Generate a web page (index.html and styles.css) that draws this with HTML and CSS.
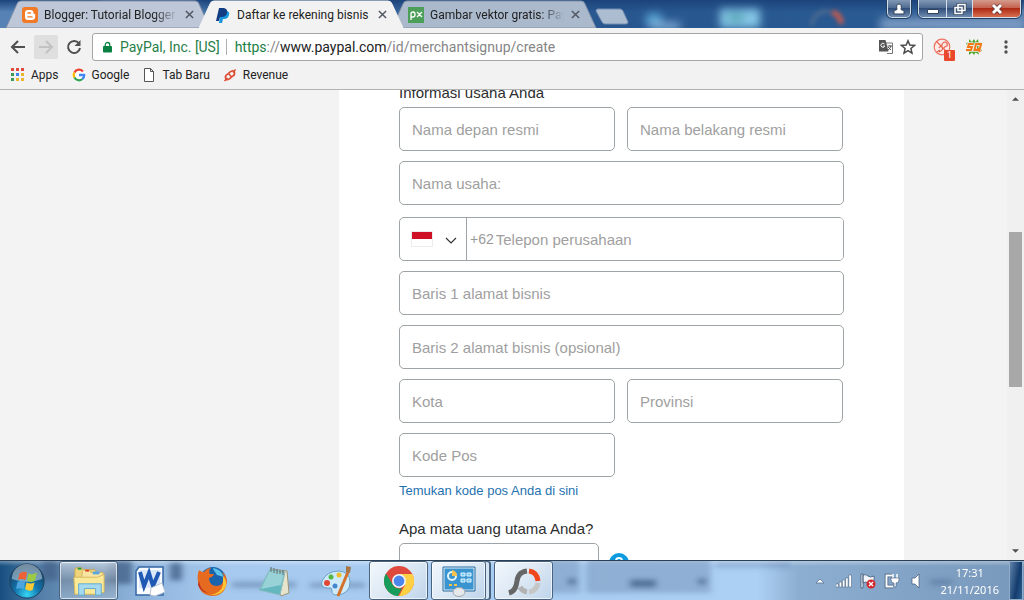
FILE: index.html
```html
<!DOCTYPE html>
<html lang="id">
<head>
<meta charset="utf-8">
<meta name="viewport" content="width=device-width, initial-scale=1">
<title>Daftar ke rekening bisnis</title>
<link rel="stylesheet" href="styles.css">
</head>
<body>
<header class="titlebar">
  <svg class="glass" viewBox="0 0 1024 28" preserveAspectRatio="none" aria-hidden="true">
    <defs><filter id="soft" x="-50%" y="-50%" width="200%" height="200%"><feGaussianBlur stdDeviation="4"/></filter><filter id="soft2" x="-50%" y="-50%" width="200%" height="200%"><feGaussianBlur stdDeviation="2"/></filter></defs>
    <g filter="url(#soft)">
      <rect x="100" y="4" width="95" height="24" fill="#b0c4dc"/>
      <ellipse cx="654" cy="20" rx="9" ry="7" fill="#59a6d6"/><rect x="650" y="22" width="30" height="8" fill="#7da9d2"/>
      <rect x="720" y="9" width="40" height="19" fill="#84c6e6"/><rect x="728" y="14" width="16" height="7" fill="#4aa0a8"/>
      <rect x="880" y="18" width="144" height="12" fill="#7d9cc4"/>
    </g>
    <g filter="url(#soft2)"><path d="M812 26a14 14 0 0 1 18-14" fill="none" stroke="#617590" stroke-width="4" opacity=".6"/><path d="M832 12q9 3 9 12" fill="none" stroke="#b55a55" stroke-width="6"/></g>
  </svg>
  <nav class="tabs" aria-label="Tab">
    <div class="tab">
      <svg class="tab-shape" viewBox="0 0 205 28" preserveAspectRatio="none" aria-hidden="true"><path d="M0 28 11 4Q12 1 15 1H189Q192 1 193 4L204 28Z" fill="#bdc7d8" stroke="#8291a8"/></svg>
      <svg class="fav" viewBox="0 0 16 16" aria-hidden="true"><rect width="16" height="16" rx="3" fill="#f17a27"/><path d="M5.800 3h2.700C10.400 3 11.500 4.200 11.500 6q0 1 1 1 .7.1.7.8v1.900Q13 13 9.800 13H6q-3-.2-3-3V5.800Q3 3 5.800 3Z" fill="#fff"/><path d="M6 6h2.500M6 9.900h4" stroke="#f17a27" stroke-width="1.400" stroke-linecap="round"/></svg>
      <span class="tab-text fade">Blogger: Tutorial Blogger</span>
      <button class="tab-x" aria-label="Tutup tab"><svg viewBox="0 0 10 10"><path d="m1 1 8 8M9 1 1 9"/></svg></button>
    </div>
    <div class="tab active">
      <svg class="tab-shape" viewBox="0 0 205 28" preserveAspectRatio="none" aria-hidden="true"><path d="M0 28 11 4Q12 1 15 1H189Q192 1 193 4L204 28Z" fill="#f2f2f2" stroke="#f2f2f2"/></svg>
      <svg class="fav" viewBox="0 0 16 16" aria-hidden="true"><path d="M6 4h5q4 0 3 4-1 4-5 4H8l-1 4H4Z" fill="#1697dc"/><path d="M4 1h5q4 1 3 5-1 4-5 4H5l-1 4H1Z" fill="#123d85"/></svg>
      <span class="tab-text">Daftar ke rekening bisnis</span>
      <button class="tab-x" aria-label="Tutup tab"><svg viewBox="0 0 10 10"><path d="m1 1 8 8M9 1 1 9"/></svg></button>
    </div>
    <div class="tab last">
      <svg class="tab-shape" viewBox="0 0 205 28" preserveAspectRatio="none" aria-hidden="true"><path d="M0 28 11 4Q12 1 15 1H189Q192 1 193 4L204 28Z" fill="#abb9cd" stroke="#8291a8"/></svg>
      <svg class="fav" viewBox="0 0 16 16" aria-hidden="true"><path d="M0 0h16v16H0z" fill="#4b9f59"/><path d="M3 13V7q0-2 2-2t2 2.500T5 10H3M9 5l5 5M14 5l-5 5" fill="none" stroke="#fff" stroke-width="1.300"/></svg>
      <span class="tab-text fade">Gambar vektor gratis: Pay</span>
      <button class="tab-x" aria-label="Tutup tab"><svg viewBox="0 0 10 10"><path d="m1 1 8 8M9 1 1 9"/></svg></button>
    </div>
    <button class="new-tab" aria-label="Tab baru"><svg viewBox="0 0 34 17"><path d="M3 1h22q2 0 3 2l5 11q0 2-2 2H10q-2 0-3-2L1 3q0-2 2-2Z" fill="#adbdd1" stroke="#728cae"/></svg></button>
  </nav>
  <div class="window-controls">
    <button class="wc user" aria-label="Profil"><svg viewBox="0 0 14 12"><path d="M2 11V8.500q1-1.500 3-2Q3.800 1 7 1t2 5.500q2 .5 3 2V11Z" fill="#fff" stroke="#31425b"/></svg></button>
    <div class="wc-group">
      <button class="wc min" aria-label="Perkecil"><svg viewBox="0 0 14 12"><path d="M1.500 6.500h11v4h-11z" fill="#fff" stroke="#31425b"/></svg></button>
      <button class="wc max" aria-label="Pulihkan"><svg viewBox="0 0 14 12"><path d="M5 1.500h7v6H5zM2 4.500h7v6H2z" fill="#566b88" stroke="#31425b" stroke-width="3"/><path d="M5 1.500h7v6H5zM2 4.500h7v6H2z" fill="#41597a" stroke="#fff" stroke-width="1.500"/></svg></button>
      <button class="wc close" aria-label="Tutup"><svg viewBox="0 0 14 12"><path d="m3 2 8 8M11 2 3 10" stroke="#5b302e" stroke-width="4.500"/><path d="m3 2 8 8M11 2 3 10" stroke="#fff" stroke-width="3"/></svg></button>
    </div>
  </div>
</header>

<div class="toolbar">
  <button class="nav-btn" aria-label="Kembali"><svg viewBox="0 0 16 16"><path d="M15 8H2M8 2 2 8l6 6"/></svg></button>
  <button class="nav-btn off" aria-label="Maju" disabled><svg viewBox="0 0 16 16"><path d="M1 8h13M8 2l6 6-6 6"/></svg></button>
  <button class="nav-btn" aria-label="Muat ulang"><svg viewBox="0 0 16 16"><path d="M13 4.500A6 6 0 1 0 14 9"/><path d="M14.500 1v6h-6Z" class="solid"/></svg></button>
  <div class="omnibox">
    <svg class="lock" viewBox="0 0 10 12" aria-hidden="true"><path d="M1 5h8q1 0 1 1v5q0 1-1 1H1q-1 0-1-1V6q0-1 1-1Z" fill="#0b8043"/><path d="M2.500 5V3.500a2.500 2.500 0 0 1 5 0V5" fill="none" stroke="#0b8043" stroke-width="1.400"/></svg>
    <span class="owner">PayPal, Inc. [US]</span>
    <span class="url"><span class="scheme">https</span><span class="dim">://</span>www.paypal.com<span class="dim">/id/merchantsignup/create</span></span>
    <button class="omni-btn" aria-label="Terjemahkan"><svg viewBox="0 0 16 16"><path d="M7 4h7.500v10.500H9" fill="#fff" stroke="#777"/><path d="M1 1h6.500l3 11.500H1Z" fill="#555"/><path d="M6.500 5a2 2 0 1 0 .3 2H5" fill="none" stroke="#fff"/><path d="M9.500 7H14M12 6v1m1 0q-1 3-3 4m0-3 3 3" fill="none" stroke="#555"/></svg></button>
    <button class="omni-btn" aria-label="Bookmark"><svg viewBox="0 0 16 16"><path d="m8 1.800 1.800 4.300 4.700.4-3.600 3 1.100 4.600L8 11.700l-4 2.400 1.100-4.600-3.600-3 4.700-.4Z" fill="none" stroke="#4b4b4b" stroke-width="1.500"/></svg></button>
  </div>
  <div class="extensions">
    <button class="ext" aria-label="Ekstensi, 1 pemberitahuan"><svg viewBox="0 0 18 18"><circle cx="9" cy="9" r="7.800" fill="#fbeae6" stroke="#ef7362" stroke-width="1.200"/><path d="m3.500 3.500 11 11M6 14q5-2 3-5-2-1-3 1M9 9q-1-4 3-5 3 1 2 4-2 0-3 2M4 14l3-2" fill="none" stroke="#ea6553" stroke-width="1.200"/></svg><span class="badge">1</span></button>
    <button class="ext" aria-label="SQ"><svg viewBox="0 0 18 18"><path d="m9 1 1.500 3L13 1l.5 3 3.500 1-2 4 2 4-3.500.5.5 3-3.500-2L9 17l-2-2.500L4 17v-3.500L1 13l2-4-2-4 3-.5L4 1l3 3Z" fill="#4fa52d"/><path d="M8.500 6H4L3 9h4l-1 3H1M11 6h5l-1.500 6H9.500Zm1.500 4 2.500 4" fill="none" stroke="#f2efe9" stroke-width="3.400"/><path d="M8.500 6H4L3 9h4l-1 3H1M11 6h5l-1.500 6H9.500Zm1.500 4 2.500 4" fill="none" stroke="#f47718" stroke-width="2"/></svg></button>
    <button class="menu" aria-label="Menu"><svg viewBox="0 0 4 14"><circle cx="2" cy="2" r="1.700"/><circle cx="2" cy="7" r="1.700"/><circle cx="2" cy="12" r="1.700"/></svg></button>
  </div>
</div>

<nav class="bookmarks" aria-label="Bookmark">
  <a href="#"><svg viewBox="0 0 14 14" aria-hidden="true"><path d="M0 0h3v3H0zM5 0h3v3H5zM10 0h3v3h-3z" fill="#e0483e"/><path d="M0 5h3v3H0z" fill="#3c9a55"/><path d="M5 5h3v3H5z" fill="#4285e8"/><path d="M10 5h3v3h-3zM5 10h3v3H5zM10 10h3v3h-3z" fill="#edb52e"/><path d="M0 10h3v3H0z" fill="#3c9a55"/></svg>Apps</a>
  <a href="#"><svg viewBox="0 0 14 14" aria-hidden="true"><circle cx="7" cy="7" r="7" fill="#fff"/><g fill="none" stroke-width="2.300"><path d="M11 3.400A5.200 5.200 0 0 0 2.400 4.500" stroke="#e94335"/><path d="M2.400 4.500a5.200 5.200 0 0 0 0 5" stroke="#fabb05"/><path d="M2.400 9.500a5.200 5.200 0 0 0 8 1.500" stroke="#34a353"/><path d="M10.400 11A5 5 0 0 0 12.200 7H7" stroke="#4285f4"/></g></svg>Google</a>
  <a href="#"><svg viewBox="0 0 14 14" aria-hidden="true"><path d="M2.500.5h6l3 3v10h-9ZM8.500.5v3h3" fill="#fff" stroke="#555"/></svg>Tab Baru</a>
  <a href="#"><svg viewBox="0 0 14 14" aria-hidden="true"><g fill="none" stroke="#dd4b30" stroke-width="1.800"><path d="M6 5.500Q2 7 2.500 9.500T5 11.500 8.500 9"/><path d="M8 9q4-1.500 3.500-4T9 3 5.500 5.500"/></g><path d="m1.500 13 3-3M12.500 1.500l-2.500 3M6 6l2 2.500" stroke="#dd4b30" stroke-width="1.500"/></svg>Revenue</a>
</nav>

<div class="viewport">
  <main class="page">
    <form class="form">
      <h2 class="heading">Informasi usaha Anda</h2>
      <div class="row">
        <input class="field" type="text" aria-label="Nama depan resmi" placeholder="Nama depan resmi">
        <input class="field" type="text" aria-label="Nama belakang resmi" placeholder="Nama belakang resmi">
      </div>
      <input class="field" type="text" aria-label="Nama usaha" placeholder="Nama usaha:">
      <div class="phone">
        <div class="country">
          <select aria-label="Negara"><option>ID</option></select>
          <svg class="flag" viewBox="0 0 22 16" aria-hidden="true"><path d="M.5.5h21v15H.5z" fill="#fff" stroke="#ececec"/><path d="M1 1h20v7H1z" fill="#ce1126"/></svg>
          <svg class="chevron" viewBox="0 0 12 8" aria-hidden="true"><path d="m1 1 5 5 5-5" fill="none" stroke="#333" stroke-width="1.200"/></svg>
        </div>
        <label class="prefix" for="tel">+62</label>
        <input id="tel" type="tel" placeholder="Telepon perusahaan">
      </div>
      <input class="field" type="text" aria-label="Baris 1 alamat bisnis" placeholder="Baris 1 alamat bisnis">
      <input class="field" type="text" aria-label="Baris 2 alamat bisnis" placeholder="Baris 2 alamat bisnis (opsional)">
      <div class="row">
        <input class="field" type="text" aria-label="Kota" placeholder="Kota">
        <input class="field" type="text" aria-label="Provinsi" placeholder="Provinsi">
      </div>
      <div class="row">
        <input class="field" type="text" aria-label="Kode Pos" placeholder="Kode Pos">
      </div>
      <a class="find" href="#">Temukan kode pos Anda di sini</a>
      <label class="heading question" for="currency">Apa mata uang utama Anda?</label>
      <div class="currency-row">
        <select class="field currency" id="currency"><option></option></select>
        <button class="help" type="button" aria-label="Bantuan"><svg viewBox="0 0 20 20"><circle cx="10" cy="10" r="10" fill="#0d9bdf"/><path d="M7 8q0-3 3-3t3 3q0 1-3 3v1m0 2v1" fill="none" stroke="#fff" stroke-width="2"/></svg></button>
      </div>
    </form>
  </main>
  <div class="scrollbar" aria-hidden="true">
    <svg class="arrow" viewBox="0 0 8 4"><path d="M0 4 4 0l4 4Z"/></svg>
    <div class="track"><div class="thumb"></div></div>
    <svg class="arrow" viewBox="0 0 8 4"><path d="m0 0 4 4 4-4Z"/></svg>
  </div>
</div>

<footer class="taskbar">
  <svg class="glass" viewBox="0 0 1024 40" preserveAspectRatio="none" aria-hidden="true">
    <defs><filter id="haze" x="-50%" y="-50%" width="200%" height="200%"><feGaussianBlur stdDeviation="3"/></filter></defs>
    <g filter="url(#haze)" fill="#44618a">
      <path d="M42 0h16v20H42zM108 0h24v24h-24zM170 2h12v18h-12z" opacity=".8"/>
      <path d="M232 21h64v7h-64zM310 22h55v6h-55zM930 18h22v7h-22z" opacity=".4"/>
      <path d="M586 -4h125v37H586zM548 -4h32v37h-32z" fill="#7796b9" opacity=".55"/>
      <path d="M630 19h26v8h-26zM698 18h8v6h-8zM568 18h8v6h-8z" opacity=".8"/>
      <path d="M715 0h75v7h-75z" opacity=".25"/>
    </g>
  </svg>
  <button class="task start" aria-label="Mulai"><svg viewBox="0 0 40 40">
    <defs><radialGradient id="orb" cx=".5" cy=".9" r=".9"><stop offset="0" stop-color="#35d7f5"/><stop offset=".4" stop-color="#1374ad"/><stop offset="1" stop-color="#16324e"/></radialGradient></defs>
    <circle cx="20" cy="20" r="18" fill="url(#orb)" stroke="#21405e"/><path d="M4 18a16 16 0 0 1 32 0q-16 6-32 0Z" fill="#d5e4ee" opacity=".5"/>
    <path d="M12 12q4-3 8-1l-1.500 8q-4-2-8 0Z" fill="#ef6235"/><path d="M21.500 12q4 2 9-1l-2 8.500q-4 3-8.500 0Z" fill="#9bca45"/><path d="M10 21q4-2 8 0l-1.500 7.500q-4-2-8 0Z" fill="#4ca5e0"/><path d="M19.500 21.500q4 2 8.500 0l-2 8q-4 2-8-1Z" fill="#fbc934"/></svg></button>
  <button class="task framed dim-frame" aria-label="Penjelajah"><svg viewBox="0 0 36 32"><path d="M3 4q0-2 2-2h5l2 2h12l2 3v21H3Z" fill="#efd47b" stroke="#c5a550"/><path d="M11 6q0-2 2-2h5l2 3h13v21H8Z" fill="#f8e6a0" stroke="#d1b361"/><path d="M6 2h4v2H6z" fill="#299c40"/><path d="M14 4h4v2h-4z" fill="#d5402b"/><path d="M22 6h7v3h-7z" fill="#58a7df"/><path d="M2 12h25l7-3v19L27 30H3Z" fill="#fae999" stroke="#d3b85e"/><path d="M7 31V19h24v12h-6v-7H13v7Z" fill="#a5daee" stroke="#62a8cf"/></svg></button>
  <button class="task" aria-label="Word"><svg viewBox="0 0 32 32"><path d="M5 2h24v28H2V6Z" fill="#f9fcff" stroke="#3566a5" stroke-width="1.500"/><path d="M5 5h21v18H5z" fill="#dce8f7"/><path d="m6 7 4 14 5-13 4 13 6-14" fill="none" stroke="#2059b4" stroke-width="4"/><path d="m17 23 11-5 3 9-10 4-5-1Z" fill="#fff" stroke="#b9c5d4"/></svg></button>
  <button class="task" aria-label="Firefox"><svg viewBox="0 0 32 32"><circle cx="17" cy="15" r="13" fill="#1a64ad"/><path d="M17 3q8 1 11 9l-7-2-4-6Z" fill="#5cc2eb"/><path d="M3 5q2 2 5 2 3-4 7-4-3 3-1 6h4q-1 3-5 4 0 7 7 8 8 0 8-10l-2-4q5 3 5 10-2 14-15 14Q3 30 2 17q-1-7 1-12Z" fill="#e66b20"/><path d="M27 11q4 4 3 10-4 10-16 9 11-2 13-10Z" fill="#fcc535"/><path d="M3 16q1 9 9 12-7-1-10-8Z" fill="#b92f22"/></svg></button>
  <button class="task" aria-label="Notepad"><svg viewBox="0 0 34 32"><path d="m14 4 16 2 2 22-8 3Z" fill="#e7e4cd" stroke="#9a9377"/><path d="m13 4 15 3-5 23L2 25Z" fill="#64b7bf" stroke="#8dbbc2"/><path d="m13 5 14 3-3 12L4 24Z" fill="#b3e1e3" opacity=".65"/><path d="M14 2v5m3-4v5m3-4v5m3-4v4m3-4v5" stroke="#626a6c"/></svg></button>
  <button class="task" aria-label="Paint"><svg viewBox="0 0 34 32"><path d="M3 16Q8 6 20 6q11 1 11 11 0 12-13 13-6 0-5-5 0-3-4-2-8 0-6-7Z" fill="#cfeaf8" stroke="#6ba1c6"/><circle cx="8" cy="18" r="3" fill="#e44634"/><circle cx="12" cy="12" r="2.500" fill="#53b642"/><circle cx="20" cy="10" r="2.500" fill="#efbd2c"/><circle cx="16" cy="21" r="2.500" fill="#4687cf"/><path d="m29 7-10 24" stroke="#d2722c" stroke-width="3"/><path d="m27 1 5 1-1 6-4-1Z" fill="#a77647"/></svg></button>
  <button class="task framed" aria-label="Chrome"><svg viewBox="0 0 32 32"><circle cx="16" cy="16" r="15" fill="#df483c"/><path d="M16 9h13.500A15 15 0 0 1 16 31l6-11Z" fill="#fdcf43"/><path d="M3 8.500 10 20q3 5 9 3l-4 8A15 15 0 0 1 3 8.500Z" fill="#169c5b"/><circle cx="16" cy="16" r="7" fill="#f5f5f5"/><circle cx="16" cy="16" r="5.400" fill="#4a86ed"/></svg></button>
  <button class="task framed stacked" aria-label="Panel Kontrol"><svg viewBox="0 0 34 32"><path d="M2 3h30v22H2z" fill="#3a94d0" stroke="#e0eff9"/><path d="M1 2h32v24H1z" fill="none" stroke="#276b9e"/><circle cx="10" cy="11" r="4" fill="none" stroke="#e3f4fb" stroke-width="2"/><path d="M10 11V5q5 1 5 6Z" fill="#f7c34c"/><path d="M19 8h4v3h-4zM25 8h4v3h-4zM19 14h4v3h-4zM25 14h4v3h-4z" fill="#6cc5ee" stroke="#e8f6ff"/><path d="M7 19h3v2H7zM12 19h3v2h-3z" fill="#f7c34c"/><ellipse cx="17" cy="27" rx="6" ry="4.500" fill="#e6e8ea" stroke="#9fa6ae"/></svg></button>
  <button class="task framed" aria-label="Perekam"><svg viewBox="0 0 34 32"><g fill="none" stroke-width="5"><path d="M31 18a10 10 0 0 1-9 9" stroke="#c6c6c6"/><path d="M20 27a10 10 0 0 1-7-5" stroke="#b3b3b3"/><path d="M20 6q-9 1-10 10-1 10-8 12" stroke="#666"/><path d="M22 6q8 1 9 10" stroke="#f0471c"/></g></svg></button>
  <div class="tray">
    <button aria-label="Ikon tersembunyi"><svg viewBox="0 0 16 16"><path d="m4 10 4-4 4 4Z" fill="#fff" stroke="#4d6787" stroke-width=".7"/></svg></button>
    <button aria-label="Jaringan"><svg viewBox="0 0 16 16"><g fill="#fff" stroke="#3f5876" stroke-width=".5"><path d="M0 11h2.500v3H0zM3.200 9h2.500v5H3.200zM6.400 7h2.500v7H6.400zM9.600 5h2.500v9H9.600zM12.800 2h2.700v12h-2.700z"/></g></svg></button>
    <button aria-label="Pusat Tindakan"><svg viewBox="0 0 16 16"><path d="M1 1h2v14H1zM3 2q3-1 5 1t6 0v7q-4 2-6 0t-5 0Z" fill="#f5f7fa" stroke="#3f5876" stroke-width=".8"/><circle cx="11" cy="11" r="4.500" fill="#d3262c"/><path d="m9 9 4 4m0-4-4 4" stroke="#fff" stroke-width="1.400"/></svg></button>
    <button aria-label="Daya"><svg viewBox="0 0 16 16"><path d="M8 2.500H2.500v11H9" fill="none" stroke="#3f5876" stroke-width="3.500"/><path d="M8 2.500H2.500v11H9" fill="none" stroke="#fff" stroke-width="2"/><path d="M9 1v4m4-4v4" stroke="#fff" stroke-width="1.500"/><path d="M7 5h8v2q0 3-3 3v4h-2v-4Q7 10 7 7Z" fill="#fff" stroke="#3f5876" stroke-width=".6"/></svg></button>
    <button class="volume" aria-label="Volume"><svg viewBox="0 0 16 16"><path d="M4 5h3l4-4v14l-4-4H4Z" fill="#fff" stroke="#3f5876" stroke-width=".7"/></svg></button>
  </div>
  <div class="clock"><span>17:31</span><span>21/11/2016</span></div>
  <button class="show-desktop" aria-label="Tampilkan desktop"></button>
</footer>
</body>
</html>
```

FILE: styles.css
```css
* { box-sizing: border-box; }
html, body { height: 100%; }
body {
  margin: 0;
  display: flex;
  flex-direction: column;
  overflow: hidden;
  background: #f2f2f2;
  color: #222;
  font: 12px/16px Roboto, "Noto Sans", sans-serif;
}
button, input, select { font: inherit; }
button { padding: 0; border: 0; background: none; color: inherit; }
svg { display: block; flex: none; }

.titlebar {
  position: relative;
  display: flex;
  flex: none;
  justify-content: space-between;
  height: 28px;
  padding-left: 6px;
  background: linear-gradient(#1c447b, transparent 12px), linear-gradient(90deg, #5682b6, #28568f 60%, #295a92 88%, #557dad);
}
.glass { position: absolute; top: 0; left: 0; width: 100%; height: 100%; }
.tabs { position: relative; display: flex; min-width: 0; }
.tab {
  position: relative;
  display: flex;
  align-items: center;
  width: 205px;
  min-width: 0;
  margin-right: -12px;
  padding: 1px 17px 0 16px;
}
.tab.active { z-index: 1; }
.tab-shape { position: absolute; top: 0; left: 0; width: 100%; height: 100%; }
.fav { position: relative; width: 16px; height: 16px; margin-right: 6px; }
.tab-text {
  position: relative;
  flex: 1;
  min-width: 0;
  overflow: hidden;
  white-space: nowrap;
}
.fade { -webkit-mask-image: linear-gradient(90deg, #000 82%, transparent); mask-image: linear-gradient(90deg, #000 82%, transparent); }
.tab-x { position: relative; margin-left: 7px; }
.tab-x svg { width: 9px; height: 9px; }
.tab-x path { stroke: #505560; stroke-width: 1.6; }
.new-tab { align-self: center; margin: 4px 0 0 10px; }
.new-tab svg { width: 34px; height: 17px; }

.window-controls { position: relative; display: flex; gap: 7px; align-items: flex-start; padding-right: 3px; }
.wc { display: flex; align-items: center; justify-content: center; height: 17px; background: linear-gradient(#8198b5, #4b678e 50%, #304e79 50%, #6e8bb0); }
.wc svg { width: 14px; height: 12px; }
.user, .wc-group { border: 1px solid #d2deea; border-top: 0; border-radius: 0 0 5px 5px; outline: 1px solid #253f62; overflow: hidden; }
.user { width: 24px; height: 18px; }
.wc-group { display: flex; }
.min { width: 27px; }
.max { width: 27px; border: solid #d2deea; border-width: 0 1px; }
.close { width: 47px; background: linear-gradient(#d39b8c, #c45d4a 50%, #ae2a14 50%, #d76e50); }

.toolbar { display: flex; flex: none; align-items: center; height: 38px; padding: 0 16px 0 6px; gap: 4px; }
.nav-btn { display: flex; align-items: center; justify-content: center; width: 24px; height: 24px; }
.nav-btn svg { width: 16px; height: 16px; fill: none; stroke: #505050; stroke-width: 2; }
.nav-btn .solid { fill: #505050; stroke: none; }
.off { background: #dfdfdf; border-radius: 2px; }
.off svg { stroke: #c2c2c2; }
.omnibox {
  display: flex;
  flex: 1;
  align-items: center;
  min-width: 0;
  height: 28px;
  margin-left: 2px;
  padding: 0 6px 0 10px;
  border: 1px solid #a5a5a5;
  border-radius: 3px;
  background: #fff;
  font-size: 14px;
  white-space: nowrap;
}
.lock { width: 9px; height: 12px; margin-right: 8px; }
.owner { padding-right: 6px; border-right: 1px solid #b0b0b0; color: #2a8048; }
.url { flex: 1; min-width: 0; padding-left: 8px; overflow: hidden; }
.scheme { color: #1b8045; }
.dim { color: #858585; }
.omni-btn { margin-left: 6px; }
.omni-btn svg { width: 16px; height: 16px; }
.extensions { display: flex; gap: 14px; align-items: center; padding-left: 6px; }
.ext { position: relative; }
.ext svg { width: 18px; height: 18px; }
.menu { margin-left: 7px; }
.menu svg { width: 4px; height: 14px; fill: #505050; }
.badge {
  position: absolute;
  top: 12px;
  left: 11px;
  width: 11px;
  height: 11px;
  border-radius: 1px;
  background: #e9482c;
  color: #fff;
  font-size: 9px;
  line-height: 11px;
}

.bookmarks { display: flex; flex: none; gap: 13px; align-items: center; height: 24px; padding: 0 11px 6px; border-bottom: 1px solid #b2b2b2; }
.bookmarks a { display: flex; gap: 6px; align-items: center; color: #222; text-decoration: none; }
.bookmarks svg { width: 14px; height: 14px; }

.viewport { display: flex; flex: 1; min-height: 0; overflow: hidden; }
.page {
  flex: 1;
  min-width: 0;
  padding: 0 103px 0 339px;
  background: #f3f3f3;
  overflow: hidden;
}
.form {
  display: flex;
  flex-direction: column;
  gap: 10px;
  margin-top: -7px;
  padding: 0 60px;
  background: #fff;
  font: 15px/20px "Liberation Sans", Arial, sans-serif;
}
.heading { margin: 0 0 -6px; font-size: 15px; font-weight: 400; line-height: 20px; color: #2c2e2f; }
.row { display: grid; grid-template-columns: 1fr 1fr; gap: 12px; padding-right: 1px; }
.field {
  width: 100%;
  min-width: 0;
  height: 44px;
  padding: 0 12px;
  border: 1px solid #9da3a6;
  border-radius: 5px;
  background: #fff;
}
input::placeholder { color: #a0a0a0; opacity: 1; }
.phone { display: flex; align-items: center; height: 44px; margin-top: 2px; border: 1px solid #9da3a6; border-radius: 5px; overflow: hidden; }
.country { position: relative; flex: none; width: 67px; height: 100%; border-right: 1px solid #9da3a6; }
.country select { width: 100%; height: 100%; border: 0; background: none; color: transparent; appearance: none; }
.flag { position: absolute; top: 13px; left: 11px; width: 22px; height: 16px; pointer-events: none; }
.chevron { position: absolute; top: 19px; right: 9px; width: 12px; height: 8px; pointer-events: none; }
.prefix { padding: 0 2px 0 3px; color: #999; font-size: 14px; }
.phone input { flex: 1; min-width: 0; height: 100%; padding: 0; border: 0; }
.find { align-self: flex-start; margin-top: -6px; color: #1f72b0; font-size: 13px; text-decoration: none; }
.question { margin-top: 8px; }
.currency-row { display: flex; gap: 10px; align-items: center; }
.currency { width: 200px; appearance: none; }
.help { margin-top: -4px; }
.help svg { width: 20px; height: 20px; }

.scrollbar { display: flex; flex: none; flex-direction: column; align-items: center; width: 17px; padding: 7px 0; background: #f0f0f0; }
.arrow { width: 7px; height: 4px; fill: #505050; }
.track { flex: 1; width: 13px; padding-top: 131px; }
.thumb { height: 49%; min-height: 30px; background: #a8a8a8; }

.taskbar {
  position: relative;
  display: flex;
  flex: none;
  align-items: stretch;
  height: 40px;
  padding: 0 1px 0 7px;
  border-top: 1px solid #2b4055;
  background: linear-gradient(#ffffff55, transparent 5px), linear-gradient(90deg, #164f80, #557fa8 4%, #8db2d9 13%, #a6c9ef 22%, #acd0f4 74%, #8caed1 78%, #7898bb);
}
.task { position: relative; display: flex; align-items: center; justify-content: center; width: 62px; }
.task svg { width: 34px; height: 32px; }
.start { width: 40px; margin-right: 12px; }
.start svg { width: 40px; height: 38px; }
.framed { width: 59px; margin: 0 1px 0 2px; border: 1px solid #48637f; border-radius: 3px; background: linear-gradient(135deg, #f2f7fc, #dce8f4 50%, #bed4ea); box-shadow: inset 0 0 0 1px #ffffffaa; }
.dim-frame { margin: 0 1px 0 0; background: linear-gradient(#d5dde6aa, #7f92a7aa 50%, #a0b8d0aa); }
.stacked { width: 55px; margin-right: 6px; box-shadow: inset 0 0 0 1px #ffffffaa, 4px 0 0 -1px #d5e4f2, 5px 0 0 #48637f; }
.tray { position: relative; display: flex; gap: 8px; align-items: center; margin-left: auto; }
.tray svg { width: 16px; height: 16px; }
.clock { position: relative; display: flex; flex-direction: column; justify-content: center; align-items: center; margin: 0 10px 0 16px; color: #fff; font-family: "Noto Sans", sans-serif; font-size: 11px; line-height: 17px; }
.show-desktop { position: relative; width: 14px; border: 1px solid #90acc8; background: linear-gradient(100deg, #6083aa, #133c6d 60%, #2f5e90); }
```
